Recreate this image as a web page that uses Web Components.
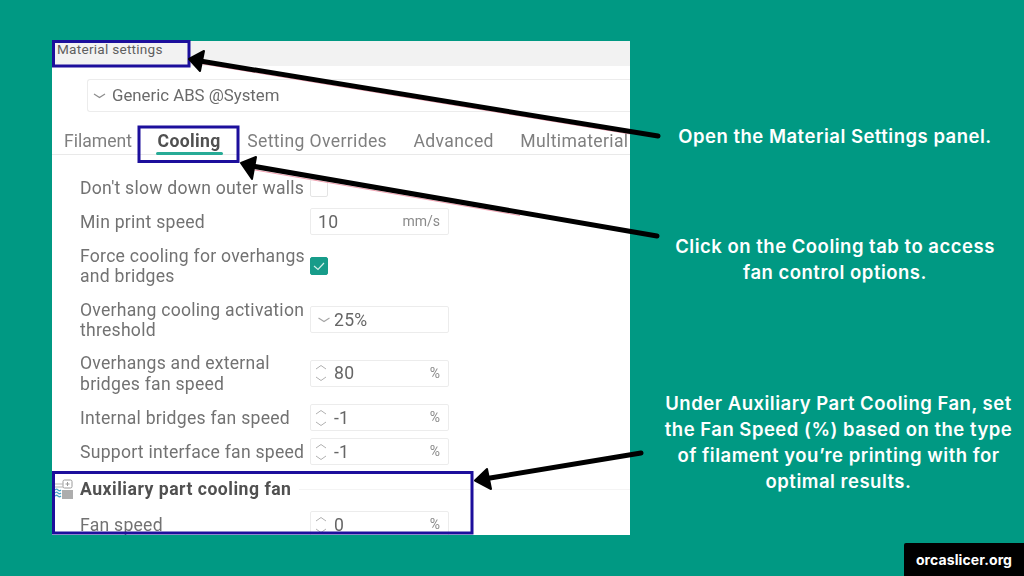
<!DOCTYPE html>
<html lang="en">
<head>
<meta charset="utf-8">
<title>Material settings</title>
<style>
   html, body { margin: 0; height: 100%; }
   body { width: 1024px; height: 576px; overflow: hidden; background: #009983; }
</style>
</head>
<body>
<slide-page>
   <settings-panel slot="panel">
      <tab-item style="margin-right:-1px;letter-spacing:0">Filament</tab-item>
      <tab-item active>Cooling</tab-item>
      <tab-item>Setting Overrides</tab-item>
      <tab-item>Advanced</tab-item>
      <tab-item>Multimaterial</tab-item>

      <setting-row slot="rows" h="30" gap="0"><span>Don't slow down outer walls</span><check-box slot="control"></check-box></setting-row>
      <setting-row slot="rows" h="27" gap="5"><span>Min print speed</span><number-field slot="control" value="10" unit="mm/s"></number-field></setting-row>
      <setting-row slot="rows" h="42" gap="9.5"><span>Force cooling for overhangs<br>and bridges</span><check-box slot="control" checked></check-box></setting-row>
      <setting-row slot="rows" h="42" gap="12"><span>Overhang cooling activation<br>threshold</span><number-field slot="control" value="25%" mode="select"></number-field></setting-row>
      <setting-row slot="rows" h="42" gap="11.5"><span>Overhangs and external<br>bridges fan speed</span><number-field slot="control" value="80" unit="%" mode="spin"></number-field></setting-row>
      <setting-row slot="rows" h="27" gap="10"><span>Internal bridges fan speed</span><number-field slot="control" value="-1" unit="%" mode="spin"></number-field></setting-row>
      <setting-row slot="rows" h="27" gap="7"><span>Support interface fan speed</span><number-field slot="control" value="-1" unit="%" mode="spin"></number-field></setting-row>
      <section-head slot="rows">Auxiliary part cooling fan</section-head>
      <setting-row slot="rows" h="27" gap="11"><span>Fan speed</span><number-field slot="control" value="0" unit="%" mode="spin"></number-field></setting-row>
   </settings-panel>

   <callout-text slot="notes" top="82" width="360">Open the Material Settings panel.</callout-text>
   <callout-text slot="notes" top="84" width="360">Click on the Cooling tab to access<br>fan control options.</callout-text>
   <callout-text slot="notes" top="105" width="367">Under Auxiliary Part Cooling Fan, set<br>the Fan Speed (%) based on the type<br>of filament you’re printing with for<br>optimal results.</callout-text>

   <annotation-layer slot="overlay"></annotation-layer>
   <site-badge slot="overlay">orcaslicer.org</site-badge>
</slide-page>

<script>
const UI_FONT = `Roboto, "Noto Sans", sans-serif`;

class SlidePage extends HTMLElement {
   constructor() {
      super();
      this.attachShadow({ mode: "open" });
      this.shadowRoot.innerHTML = `
         <style>
            :host { display: block; position: relative; width: 1024px; height: 576px; overflow: hidden; }
            .wrap { display: flex; padding: 41px 0 0 52px; height: 535px; box-sizing: content-box; }
            .notes { display: flex; flex-direction: column; width: 394px; padding-left: 25px; box-sizing: border-box; }
         </style>
         <div class="wrap">
            <slot name="panel"></slot>
            <div class="notes"><slot name="notes"></slot></div>
         </div>
         <slot name="overlay"></slot>
      `;
   }
}

class SettingsPanel extends HTMLElement {
   constructor() {
      super();
      this.attachShadow({ mode: "open" });
      this.shadowRoot.innerHTML = `
         <style>
            :host {
               display: block; flex: none; width: 578px; height: 494px; overflow: hidden;
               background: #fff; color: #727272;
               font: 17.6px/20.5px ${UI_FONT}; letter-spacing: 0.25px;
            }
            .body { filter: blur(0.55px); }
            header {
               height: 25px; background: #f2f2f2; padding-left: 5px;
               font-size: 13.6px; line-height: 17px; color: #5f5f5f;
            }
            .preset-row { display: flex; height: 33px; margin-top: 13px; padding-left: 35px; }
            .preset {
               flex: 1; display: flex; align-items: center; gap: 6px; padding-left: 5px;
               border: solid #ececec; border-width: 1px 0 1px 1px; border-radius: 3px 0 0 3px;
               color: #6a6a6a; font-size: 16.8px; letter-spacing: 0;
            }
            .tabs {
               display: flex; gap: 26.5px; height: 30px; margin-top: 12px; padding-left: 12px;
               border-bottom: 1px solid #e9e9e9; letter-spacing: 0.35px;
            }
            .rows { padding: 18px 0 0 28px; }
         </style>
         <div class="body">
            <header>Material settings</header>
            <div class="preset-row">
               <div class="preset">
                  <svg width="13" height="6" viewBox="0 0 13 6"><path d="M1 1 L6.5 4.5 L12 1" fill="none" stroke="#8c8c8c" stroke-width="1.2"/></svg>
                  <span>Generic ABS @System</span>
               </div>
            </div>
            <div class="tabs"><slot></slot></div>
            <div class="rows"><slot name="rows"></slot></div>
         </div>
      `;
   }
}

class TabItem extends HTMLElement {
   constructor() {
      super();
      this.attachShadow({ mode: "open" });
      this.shadowRoot.innerHTML = `
         <style>
            :host { display: block; position: relative; line-height: 34px; height: 30px; color: #7f7f7f; white-space: nowrap; }
            :host([active]) { color: #505050; font-weight: 700; }
            :host([active])::after {
               content: ""; position: absolute; left: -2px; right: -2px; top: 28px; height: 3px;
               border-radius: 2px; background: #27ab96;
            }
         </style>
         <slot></slot>
      `;
   }
}

class SettingRow extends HTMLElement {
   constructor() {
      super();
      this.attachShadow({ mode: "open" });
      this.shadowRoot.innerHTML = `
         <style>
            :host { display: flex; align-items: center; width: 369px; }
            .label { width: 230px; flex: none; white-space: nowrap; padding-top: 1px; }
            .ctl { display: flex; align-items: center; }
         </style>
         <div class="label"><slot></slot></div>
         <div class="ctl"><slot name="control"></slot></div>
      `;
   }
   connectedCallback() {
      this.style.height = this.getAttribute("h") + "px";
      this.style.marginTop = this.getAttribute("gap") + "px";
   }
}

class CheckBox extends HTMLElement {
   constructor() {
      super();
      this.attachShadow({ mode: "open" });
      this.shadowRoot.innerHTML = `
         <style>
            :host { display: block; width: 18px; height: 18px; box-sizing: border-box; border: 1px solid #e4e4e4; border-radius: 2px; background: #fff; }
            :host([checked]) { background: #179c8a; border-color: #179c8a; }
            svg { display: block; }
         </style>
         <svg width="16" height="16" viewBox="0 0 16 16"><path d="M3 8 L7 11.5 L13 5" fill="none" stroke="#d5efea" stroke-width="1.2"/></svg>
      `;
   }
   connectedCallback() {
      if (!this.hasAttribute("checked")) this.shadowRoot.querySelector("svg").style.display = "none";
   }
}

class NumberField extends HTMLElement {
   constructor() {
      super();
      this.attachShadow({ mode: "open" });
      this.shadowRoot.innerHTML = `
         <style>
            :host {
               display: flex; align-items: center; box-sizing: border-box; width: 139px; height: 27px;
               padding: 0 8px 0 4px; border: 1px solid #ececec; border-radius: 2px;
               color: #666;
            }
            svg { flex: none; margin-right: 7px; }
            .val { flex: 1; padding-top: 1px; }
            .unit { font-size: 14px; color: #8a8a8a; letter-spacing: 0; }
         </style>
         <svg class="icon" width="12" height="22" viewBox="0 0 12 22"></svg>
         <span class="val"></span>
         <span class="unit"></span>
      `;
   }
   connectedCallback() {
      const root = this.shadowRoot;
      const mode = this.getAttribute("mode");
      const icon = root.querySelector(".icon");
      root.querySelector(".val").textContent = this.getAttribute("value");
      root.querySelector(".unit").textContent = this.getAttribute("unit") || "";
      if (mode == "spin") {
         icon.innerHTML = `<path d="M1 7 L6 3.5 L11 7 M1 15 L6 18.5 L11 15" fill="none" stroke="#b0b0b0" stroke-width="1"/>`;
      }
      else if (mode == "select") {
         icon.setAttribute("width", "13");
         icon.innerHTML = `<path d="M1 9 L6.5 12.5 L12 9" fill="none" stroke="#a5a5a5" stroke-width="1.1"/>`;
         icon.style.marginRight = "4px";
         this.style.paddingLeft = "6px";
      }
      else {
         icon.style.display = "none";
         this.style.paddingLeft = "7px";
      }
   }
}

class SectionHead extends HTMLElement {
   constructor() {
      super();
      this.attachShadow({ mode: "open" });
      this.shadowRoot.innerHTML = `
         <style>
            :host { display: flex; align-items: center; height: 22px; margin: 13px 0 0 -25px; font-weight: 700; color: #505050; letter-spacing: 0.5px; white-space: nowrap; }
            svg { flex: none; margin-right: 6px; }
            i { flex: 1; height: 1px; margin-left: 8px; background: #f4f4f4; }
         </style>
         <svg width="19" height="21" viewBox="0 0 19 21">
            <rect x="8" y="1" width="9" height="8" rx="1.5" fill="none" stroke="#9a9a9a"/>
            <path d="M10.5 5 h4 M12.5 3 v4" stroke="#9a9a9a"/>
            <path d="M0 5 H8 M0 8 H8" stroke="#b5b5b5"/>
            <rect x="7" y="11" width="11" height="9" fill="#adadad"/>
            <path d="M0 11 q1.5 -1.5 3 0 t3 0 M0 14 q1.5 -1.5 3 0 t3 0 M0 17 q1.5 -1.5 3 0 t3 0" fill="none" stroke="#4aa6c9" stroke-width="1.2"/>
         </svg>
         <slot></slot>
         <i></i>
      `;
   }
}

class CalloutText extends HTMLElement {
   constructor() {
      super();
      this.attachShadow({ mode: "open" });
      this.shadowRoot.innerHTML = `
         <style>
            :host {
               display: block; text-align: center; color: #fff; white-space: nowrap;
               font: 600 18.5px/26px Inter, "Open Sans", sans-serif; letter-spacing: 0.5px;
            }
         </style>
         <slot></slot>
      `;
   }
   connectedCallback() {
      this.style.marginTop = this.getAttribute("top") + "px";
      this.style.width = this.getAttribute("width") + "px";
   }
}

class AnnotationLayer extends HTMLElement {
   constructor() {
      super();
      this.attachShadow({ mode: "open" });
      this.shadowRoot.innerHTML = `
         <style>
            :host { position: absolute; left: 0; top: 0; width: 1024px; height: 576px; pointer-events: none; }
            svg { display: block; }
         </style>
         <svg width="1024" height="576" viewBox="0 0 1024 576">
            <g fill="none" stroke="#1c0f9c" stroke-width="3">
               <rect x="53.5" y="41.5" width="135.5" height="24.5"/>
               <rect x="139" y="127" width="99" height="34.5"/>
               <rect x="53.5" y="472.5" width="418.5" height="60.5"/>
            </g>
            <g fill="none" stroke="#f0a0b0" stroke-width="1">
               <path d="M200 63.5 L630 134"/>
               <path d="M252 169.5 L520 215.5"/>
            </g>
            <g fill="none" stroke="#000" stroke-width="5" stroke-linecap="round">
               <path d="M197 60.5 L658 136"/>
               <path d="M249 165.5 L657 236"/>
               <path d="M484 479 L641 453"/>
            </g>
            <g fill="#000" stroke="#000" stroke-width="2" stroke-linejoin="round">
               <path d="M189 59 L204 51 L200 71 Z"/>
               <path d="M241 163 L256 157 L252 179 Z"/>
               <path d="M475 480.5 L487 469 L491 489 Z"/>
            </g>
         </svg>
      `;
   }
}

class SiteBadge extends HTMLElement {
   constructor() {
      super();
      this.attachShadow({ mode: "open" });
      this.shadowRoot.innerHTML = `
         <style>
            :host {
               position: absolute; right: 0; bottom: 0; width: 120px; height: 33px;
               display: flex; align-items: center; justify-content: center;
               background: #000; border-top-left-radius: 2px; color: #fff;
               font: 700 14px/1 Inter, "Open Sans", sans-serif; letter-spacing: 0.1px;
            }
         </style>
         <slot></slot>
      `;
   }
}

customElements.define("slide-page", SlidePage);
customElements.define("settings-panel", SettingsPanel);
customElements.define("tab-item", TabItem);
customElements.define("setting-row", SettingRow);
customElements.define("check-box", CheckBox);
customElements.define("number-field", NumberField);
customElements.define("section-head", SectionHead);
customElements.define("callout-text", CalloutText);
customElements.define("annotation-layer", AnnotationLayer);
customElements.define("site-badge", SiteBadge);
</script>
</body>
</html>
